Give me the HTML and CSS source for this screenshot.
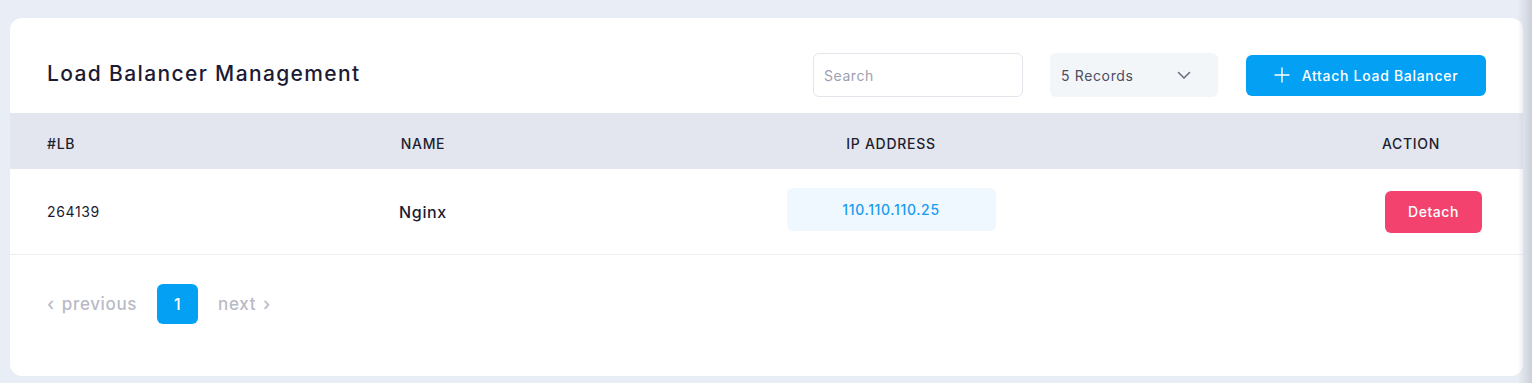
FILE: index.html
```html
<!DOCTYPE html>
<html lang="en">
<head>
  <meta charset="UTF-8" />
  <meta name="viewport" content="width=device-width, initial-scale=1.0"/>
  <title>Load Balancer Management</title>
  <link rel="stylesheet" href="styles.css">
</head>
<body>

  <div class="card">
    <div class="card-header">
      <h2 class="card-title">Load Balancer Management</h2>
      <div class="toolbar">
        <input class="search" type="text" placeholder="Search" />
        <div class="records">
          <span>5 Records</span>
          <svg width="16" height="16" viewBox="0 0 16 16" fill="none" stroke="#6b6d80" stroke-width="1.6" stroke-linecap="round" stroke-linejoin="round"><path d="M2.5 5.5l5.5 5.5 5.5-5.5"/></svg>
        </div>
        <button class="attach">
          <svg width="16" height="16" viewBox="0 0 16 16" fill="none" stroke="#fff" stroke-width="1.4" stroke-linecap="round"><path d="M8 1v14M1 8h14"/></svg>
          Attach Load Balancer
        </button>
      </div>
    </div>

    <div class="table">
      <div class="row head">
        <div class="cell">#LB</div>
        <div class="cell center">NAME</div>
        <div class="cell center">IP ADDRESS</div>
        <div class="cell action-head">ACTION</div>
      </div>
      <div class="row body">
        <div class="cell id">264139</div>
        <div class="cell center name">Nginx</div>
        <div class="cell center"><span class="ip">110.110.110.25</span></div>
        <div class="cell action"><button class="detach">Detach</button></div>
      </div>
    </div>

    <div class="pager">
      <a class="pager-link" href="#"><span class="chev">&lsaquo;</span>previous</a>
      <a class="pager-page" href="#">1</a>
      <a class="pager-link" href="#">next<span class="chev">&rsaquo;</span></a>
    </div>
  </div>

</body>
</html>
```

FILE: styles.css
```css
body {
  margin: 0;
  padding: 18px 9px 7px 10px;
  background: #e9edf5;
  font-family: Inter, 'Noto Sans', sans-serif;
  letter-spacing: 0.04em;
  color: #1c1b33;
  overflow: hidden;
}

/* shade along the right edge of the window */
body::after {
  content: '';
  position: fixed;
  top: 0;
  right: 0;
  width: 14px;
  height: 100%;
  background: linear-gradient(to right, rgba(200,204,212,0), rgba(200,204,212,0.9));
  pointer-events: none;
}

.card {
  background: #fff;
  border-radius: 12px;
  height: 358px;
  box-sizing: border-box;
  overflow: hidden;
}

.card-header {
  display: flex;
  align-items: center;
  justify-content: space-between;
  padding: 35px 37px 16px 37px;
}

.card-title {
  margin: 0 0 4px 0;
  font-size: 21px;
  font-weight: 500;
  letter-spacing: 0.065em;
  color: #1c1b33;
}

.toolbar {
  display: flex;
  align-items: center;
}

.search {
  width: 210px;
  height: 44px;
  box-sizing: border-box;
  border: 1px solid #e3e4ec;
  border-radius: 6px;
  padding: 0 10px;
  font-family: inherit;
  font-size: 14px;
  letter-spacing: 0.04em;
  outline: none;
}

.search::placeholder {
  color: #9d9fb1;
}

.records {
  width: 168px;
  height: 44px;
  box-sizing: border-box;
  margin-left: 27px;
  background: #f3f6f9;
  border-radius: 6px;
  display: flex;
  align-items: center;
  justify-content: space-between;
  padding: 0 26px 0 11px;
  font-size: 14px;
  color: #4b4d63;
}

.attach {
  margin-left: 28px;
  width: 240px;
  height: 41px;
  border: none;
  border-radius: 6px;
  background: #03a0f3;
  color: #fff;
  font-family: inherit;
  font-size: 14px;
  font-weight: 500;
  letter-spacing: 0.05em;
  display: flex;
  align-items: center;
  justify-content: center;
  gap: 12px;
}

.row {
  display: grid;
  grid-template-columns: 253px 246px 690px 1fr;
  padding: 0 37px;
  align-items: center;
}

.row.head {
  height: 56px;
  box-sizing: border-box;
  padding-top: 4px;
  background: #e3e6ef;
  font-size: 14px;
  font-weight: 500;
  letter-spacing: 0.05em;
  color: #1e1e2e;
}

.row.body {
  height: 85px;
  border-bottom: 1px solid #eceef3;
}

.cell.center {
  text-align: center;
}

.action-head {
  text-align: center;
  padding-left: 100px;
}

.id {
  font-size: 14px;
}

.name {
  font-size: 16px;
  font-weight: 500;
}

.ip {
  display: inline-block;
  width: 209px;
  height: 43px;
  line-height: 43px;
  margin-bottom: 4px;
  background: #eff8fe;
  border-radius: 6px;
  color: #1a9bf0;
  font-size: 14px;
  font-weight: 500;
}

.action {
  display: flex;
  justify-content: flex-end;
  padding-right: 4px;
}

.detach {
  width: 97px;
  height: 42px;
  margin-top: 0;
  border: none;
  border-radius: 6px;
  background: #f4426e;
  color: #fff;
  font-family: inherit;
  font-size: 14px;
  font-weight: 500;
  letter-spacing: 0.04em;
}

.pager {
  display: flex;
  align-items: center;
  gap: 20px;
  padding: 29px 37px;
}

.pager-link {
  color: #b9bac7;
  text-decoration: none;
  font-size: 17px;
  font-weight: 500;
  display: flex;
  align-items: center;
  gap: 7px;
}

.chev {
  font-size: 18px;
  margin-top: -2px;
}

.pager-page {
  width: 41px;
  height: 40px;
  line-height: 40px;
  text-align: center;
  background: #03a0f3;
  border-radius: 6px;
  color: #fff;
  text-decoration: none;
  font-size: 16px;
  font-weight: 500;
}
```
